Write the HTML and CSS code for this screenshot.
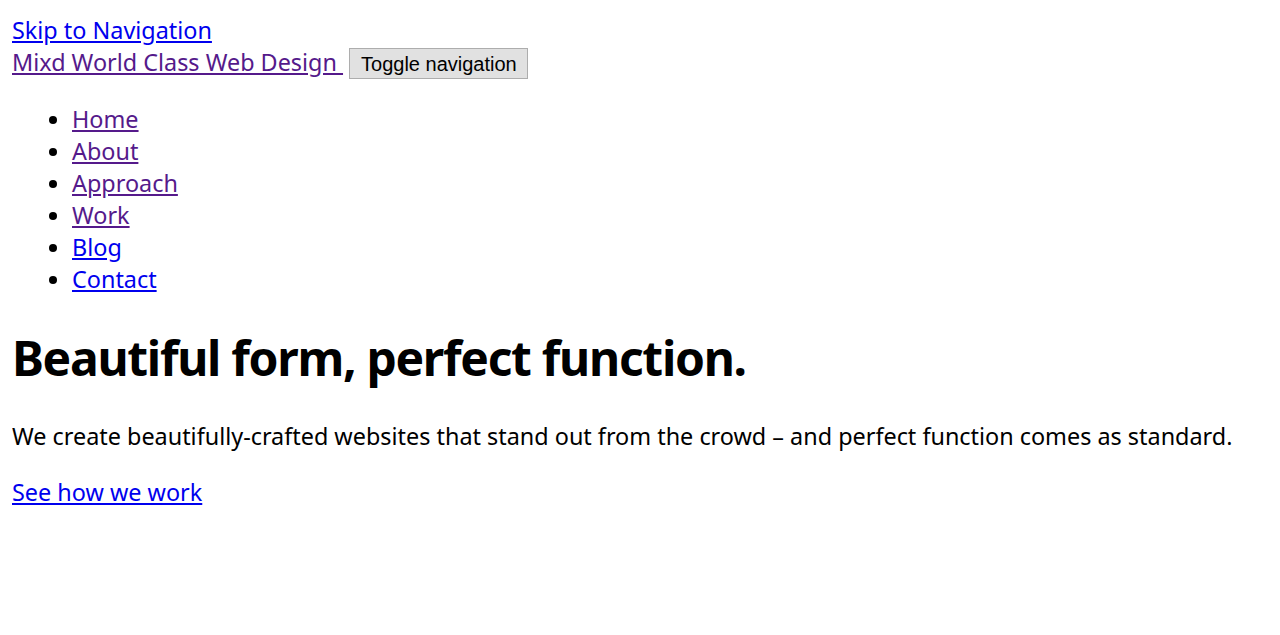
FILE: index.html
```html
<!DOCTYPE html>
<html lang="en">
<head>
<meta charset="utf-8">
<title>Mixd</title>
<link rel="stylesheet" href="styles.css">
</head>
<body>
<div class="header">
<a href="#nav" class="link">Skip to Navigation</a><br>
<a href="#" class="link visited">Mixd World Class Web Design </a><button class="toggle" type="button">Toggle navigation</button>
</div>
<ul class="nav" id="nav">
<li><a href="#" class="link visited">Home</a></li>
<li><a href="#" class="link visited">About</a></li>
<li><a href="#" class="link visited">Approach</a></li>
<li><a href="#" class="link visited">Work</a></li>
<li><a href="#" class="link">Blog</a></li>
<li><a href="#" class="link">Contact</a></li>
</ul>
<h1 class="title">Beautiful form, perfect function.</h1>
<p class="intro">We create beautifully-crafted websites that stand out from the crowd – and perfect function comes as standard.</p>
<p class="intro"><a href="#" class="link">See how we work</a></p>
</body>
</html>
```
FILE: styles.css
```css
html, body {
  background: #ffffff;
}
body {
  margin: 14px 12px 12px;
  font-family: "Noto Sans", sans-serif;
  font-size: 23.4px;
  line-height: 32px;
  color: #000000;
}
.link {
  color: #0000ee;
  text-decoration: underline;
}
.link.visited {
  color: #551a8b;
}
.toggle {
  font-family: "Liberation Sans", Arial, sans-serif;
  font-size: 20px;
  line-height: 23px;
  height: 31px;
  padding: 2px 10px 0 11px;
  margin: 0 0 0 6px;
  background: #e1e1e1;
  border: 1px solid #adadad;
  border-radius: 0;
  color: #000;
  vertical-align: baseline;
}
.nav {
  margin: 24px 0;
  padding-left: 60px;
}
.title {
  font-size: 48px;
  line-height: 64px;
  font-weight: bold;
  letter-spacing: -1.3px;
  margin: 31px 0 30px;
}
.intro {
  margin: 24px 0;
}
```
